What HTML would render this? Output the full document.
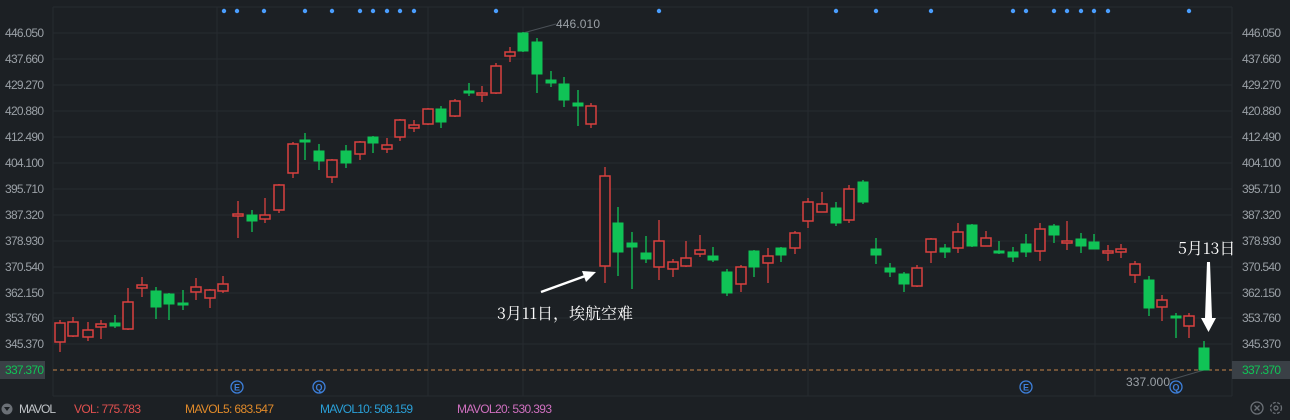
<!DOCTYPE html>
<html><head><meta charset="utf-8"><style>
html,body{margin:0;padding:0;background:#1c2024;width:1290px;height:420px;overflow:hidden;font-family:"Liberation Sans","Noto Sans CJK SC",sans-serif}
svg{position:absolute;left:0;top:0}
.ax{font-size:12px;fill:#9aa0a6}
.r line{stroke:#d9413f;stroke-width:1.3}
.r rect{fill:#1c2024;stroke:#d9413f;stroke-width:1.5}
.g line{stroke:#10c356;stroke-width:1.3}
.g rect{fill:#10c356;stroke:#10c356;stroke-width:1}
.bt{font-size:12px}
</style></head><body>
<svg width="1290" height="420" viewBox="0 0 1290 420">
<g stroke="#262b30" stroke-width="1">
<line x1="53" y1="7" x2="1232" y2="7"/>
<line x1="53" y1="33" x2="1232" y2="33"/><line x1="53" y1="59" x2="1232" y2="59"/><line x1="53" y1="85" x2="1232" y2="85"/><line x1="53" y1="111" x2="1232" y2="111"/><line x1="53" y1="137" x2="1232" y2="137"/><line x1="53" y1="163" x2="1232" y2="163"/><line x1="53" y1="189" x2="1232" y2="189"/><line x1="53" y1="215" x2="1232" y2="215"/><line x1="53" y1="241" x2="1232" y2="241"/><line x1="53" y1="267" x2="1232" y2="267"/><line x1="53" y1="293" x2="1232" y2="293"/><line x1="53" y1="318" x2="1232" y2="318"/><line x1="53" y1="344" x2="1232" y2="344"/>
<line x1="53" y1="396" x2="1232" y2="396"/>
<line x1="53" y1="7" x2="53" y2="396"/><line x1="1232" y1="7" x2="1232" y2="396"/>
<line x1="217" y1="7" x2="217" y2="396"/><line x1="428" y1="7" x2="428" y2="396"/><line x1="523" y1="7" x2="523" y2="396"/><line x1="808" y1="7" x2="808" y2="396"/><line x1="1095" y1="7" x2="1095" y2="396"/>
</g>
<g class="ax" text-anchor="start">
<text x="5" y="37" textLength="39">446.050</text><text x="5" y="63" textLength="39">437.660</text><text x="5" y="89" textLength="39">429.270</text><text x="5" y="115" textLength="39">420.880</text><text x="5" y="141" textLength="39">412.490</text><text x="5" y="167" textLength="39">404.100</text><text x="5" y="193" textLength="39">395.710</text><text x="5" y="219" textLength="39">387.320</text><text x="5" y="245" textLength="39">378.930</text><text x="5" y="271" textLength="39">370.540</text><text x="5" y="297" textLength="39">362.150</text><text x="5" y="322" textLength="39">353.760</text><text x="5" y="348" textLength="39">345.370</text>
<text x="1242" y="37" textLength="39">446.050</text><text x="1242" y="63" textLength="39">437.660</text><text x="1242" y="89" textLength="39">429.270</text><text x="1242" y="115" textLength="39">420.880</text><text x="1242" y="141" textLength="39">412.490</text><text x="1242" y="167" textLength="39">404.100</text><text x="1242" y="193" textLength="39">395.710</text><text x="1242" y="219" textLength="39">387.320</text><text x="1242" y="245" textLength="39">378.930</text><text x="1242" y="271" textLength="39">370.540</text><text x="1242" y="297" textLength="39">362.150</text><text x="1242" y="322" textLength="39">353.760</text><text x="1242" y="348" textLength="39">345.370</text>
</g>
<rect x="0" y="361" width="45" height="18" fill="#3a4046"/>
<rect x="1232" y="361" width="58" height="18" fill="#3a4046"/>
<text x="5" y="374" font-size="12" fill="#10c356" textLength="39">337.370</text>
<text x="1242" y="374" font-size="12" fill="#10c356" textLength="39">337.370</text>
<line x1="53" y1="370" x2="1232" y2="370" stroke="#c8864a" stroke-width="1" stroke-dasharray="4,3"/>
<g fill="#4a9eff">
<circle cx="224" cy="11" r="2.2"/><circle cx="237" cy="11" r="2.2"/><circle cx="264" cy="11" r="2.2"/><circle cx="305" cy="11" r="2.2"/><circle cx="332" cy="11" r="2.2"/><circle cx="360" cy="11" r="2.2"/><circle cx="373" cy="11" r="2.2"/><circle cx="387" cy="11" r="2.2"/><circle cx="400" cy="11" r="2.2"/><circle cx="414" cy="11" r="2.2"/><circle cx="496" cy="11" r="2.2"/><circle cx="659" cy="11" r="2.2"/><circle cx="836" cy="11" r="2.2"/><circle cx="876" cy="11" r="2.2"/><circle cx="931" cy="11" r="2.2"/><circle cx="1013" cy="11" r="2.2"/><circle cx="1026" cy="11" r="2.2"/><circle cx="1054" cy="11" r="2.2"/><circle cx="1067" cy="11" r="2.2"/><circle cx="1081" cy="11" r="2.2"/><circle cx="1094" cy="11" r="2.2"/><circle cx="1108" cy="11" r="2.2"/><circle cx="1189" cy="11" r="2.2"/>
</g>
<line x1="523" y1="33" x2="556" y2="24" stroke="#4a5056"/>
<text x="556" y="28" font-size="12" fill="#9aa0a6" textLength="44">446.010</text>
<line x1="1204" y1="370" x2="1170" y2="380" stroke="#4a5056"/>
<text x="1126" y="386" font-size="12" fill="#9aa0a6" textLength="44">337.000</text>
<!-- candles -->
<g class="r"><line x1="60" y1="320" x2="60" y2="352"/><rect x="55" y="323" width="10" height="19"/></g>
<g class="r"><line x1="73" y1="317" x2="73" y2="337"/><rect x="68" y="322" width="10" height="14"/></g>
<g class="r"><line x1="88" y1="322" x2="88" y2="341"/><rect x="83" y="330" width="10" height="7"/></g>
<g class="r"><line x1="101" y1="320" x2="101" y2="339"/><rect x="96" y="324" width="10" height="3"/></g>
<g class="g"><line x1="115" y1="315" x2="115" y2="328"/><rect x="110" y="323" width="10" height="3"/></g>
<g class="r"><line x1="128" y1="288" x2="128" y2="330"/><rect x="123" y="302" width="10" height="27"/></g>
<g class="r"><line x1="142" y1="277" x2="142" y2="297"/><rect x="137" y="285" width="10" height="3"/></g>
<g class="g"><line x1="156" y1="287" x2="156" y2="319"/><rect x="151" y="291" width="10" height="16"/></g>
<g class="g"><line x1="169" y1="293" x2="169" y2="320"/><rect x="164" y="294" width="10" height="10"/></g>
<g class="g"><line x1="183" y1="290" x2="183" y2="310"/><rect x="178" y="303" width="10" height="2"/></g>
<g class="r"><line x1="196" y1="278" x2="196" y2="300"/><rect x="191" y="287" width="10" height="5"/></g>
<g class="r"><line x1="210" y1="289" x2="210" y2="308"/><rect x="205" y="290" width="10" height="8"/></g>
<g class="r"><line x1="223" y1="276" x2="223" y2="293"/><rect x="218" y="284" width="10" height="7"/></g>
<g class="r"><line x1="238" y1="201" x2="238" y2="238"/><rect x="233" y="214" width="10" height="2"/></g>
<g class="g"><line x1="252" y1="210" x2="252" y2="232"/><rect x="247" y="215" width="10" height="6"/></g>
<g class="r"><line x1="265" y1="198" x2="265" y2="223"/><rect x="260" y="215" width="10" height="4"/></g>
<g class="r"><line x1="279" y1="184" x2="279" y2="213"/><rect x="274" y="185" width="10" height="25"/></g>
<g class="r"><line x1="293" y1="142" x2="293" y2="178"/><rect x="288" y="144" width="10" height="29"/></g>
<g class="g"><line x1="305" y1="133" x2="305" y2="160"/><rect x="300" y="140" width="10" height="2"/></g>
<g class="g"><line x1="319" y1="144" x2="319" y2="170"/><rect x="314" y="151" width="10" height="10"/></g>
<g class="r"><line x1="332" y1="159" x2="332" y2="183"/><rect x="327" y="160" width="10" height="17"/></g>
<g class="g"><line x1="346" y1="145" x2="346" y2="168"/><rect x="341" y="151" width="10" height="12"/></g>
<g class="r"><line x1="360" y1="141" x2="360" y2="160"/><rect x="355" y="142" width="10" height="12"/></g>
<g class="g"><line x1="373" y1="136" x2="373" y2="153"/><rect x="368" y="137" width="10" height="6"/></g>
<g class="r"><line x1="387" y1="138" x2="387" y2="153"/><rect x="382" y="145" width="10" height="4"/></g>
<g class="r"><line x1="400" y1="119" x2="400" y2="141"/><rect x="395" y="120" width="10" height="17"/></g>
<g class="r"><line x1="414" y1="120" x2="414" y2="132"/><rect x="409" y="125" width="10" height="3"/></g>
<g class="r"><line x1="428" y1="108" x2="428" y2="125"/><rect x="423" y="109" width="10" height="15"/></g>
<g class="g"><line x1="441" y1="106" x2="441" y2="128"/><rect x="436" y="109" width="10" height="13"/></g>
<g class="r"><line x1="455" y1="99" x2="455" y2="117"/><rect x="450" y="101" width="10" height="15"/></g>
<g class="g"><line x1="469" y1="83" x2="469" y2="96"/><rect x="464" y="91" width="10" height="2"/></g>
<g class="r"><line x1="482" y1="86" x2="482" y2="102"/><rect x="477" y="93" width="10" height="2"/></g>
<g class="r"><line x1="496" y1="63" x2="496" y2="94"/><rect x="491" y="66" width="10" height="27"/></g>
<g class="r"><line x1="510" y1="47" x2="510" y2="62"/><rect x="505" y="52" width="10" height="4"/></g>
<g class="g"><line x1="523" y1="32" x2="523" y2="52"/><rect x="518" y="33" width="10" height="18"/></g>
<g class="g"><line x1="537" y1="38" x2="537" y2="93"/><rect x="532" y="42" width="10" height="32"/></g>
<g class="g"><line x1="551" y1="71" x2="551" y2="87"/><rect x="546" y="80" width="10" height="3"/></g>
<g class="g"><line x1="564" y1="77" x2="564" y2="107"/><rect x="559" y="84" width="10" height="16"/></g>
<g class="g"><line x1="578" y1="90" x2="578" y2="126"/><rect x="573" y="103" width="10" height="3"/></g>
<g class="r"><line x1="591" y1="103" x2="591" y2="128"/><rect x="586" y="106" width="10" height="18"/></g>
<g class="r"><line x1="605" y1="167" x2="605" y2="283"/><rect x="600" y="176" width="10" height="90"/></g>
<g class="g"><line x1="618" y1="207" x2="618" y2="276"/><rect x="613" y="223" width="10" height="29"/></g>
<g class="g"><line x1="632" y1="232" x2="632" y2="289"/><rect x="627" y="243" width="10" height="4"/></g>
<g class="g"><line x1="646" y1="236" x2="646" y2="263"/><rect x="641" y="253" width="10" height="6"/></g>
<g class="r"><line x1="659" y1="220" x2="659" y2="280"/><rect x="654" y="241" width="10" height="26"/></g>
<g class="r"><line x1="673" y1="259" x2="673" y2="277"/><rect x="668" y="262" width="10" height="7"/></g>
<g class="r"><line x1="686" y1="241" x2="686" y2="267"/><rect x="681" y="258" width="10" height="8"/></g>
<g class="r"><line x1="700" y1="235" x2="700" y2="257"/><rect x="695" y="250" width="10" height="4"/></g>
<g class="g"><line x1="713" y1="247" x2="713" y2="262"/><rect x="708" y="256" width="10" height="4"/></g>
<g class="g"><line x1="727" y1="269" x2="727" y2="296"/><rect x="722" y="272" width="10" height="21"/></g>
<g class="r"><line x1="741" y1="265" x2="741" y2="292"/><rect x="736" y="267" width="10" height="17"/></g>
<g class="g"><line x1="754" y1="250" x2="754" y2="277"/><rect x="749" y="251" width="10" height="16"/></g>
<g class="r"><line x1="768" y1="248" x2="768" y2="283"/><rect x="763" y="256" width="10" height="7"/></g>
<g class="g"><line x1="781" y1="247" x2="781" y2="262"/><rect x="776" y="248" width="10" height="7"/></g>
<g class="r"><line x1="795" y1="231" x2="795" y2="254"/><rect x="790" y="233" width="10" height="15"/></g>
<g class="r"><line x1="808" y1="198" x2="808" y2="228"/><rect x="803" y="202" width="10" height="19"/></g>
<g class="r"><line x1="822" y1="192" x2="822" y2="212"/><rect x="817" y="204" width="10" height="8"/></g>
<g class="g"><line x1="836" y1="202" x2="836" y2="226"/><rect x="831" y="208" width="10" height="15"/></g>
<g class="r"><line x1="849" y1="185" x2="849" y2="223"/><rect x="844" y="189" width="10" height="31"/></g>
<g class="g"><line x1="863" y1="180" x2="863" y2="204"/><rect x="858" y="182" width="10" height="20"/></g>
<g class="g"><line x1="876" y1="238" x2="876" y2="264"/><rect x="871" y="249" width="10" height="6"/></g>
<g class="g"><line x1="890" y1="263" x2="890" y2="277"/><rect x="885" y="268" width="10" height="4"/></g>
<g class="g"><line x1="904" y1="272" x2="904" y2="292"/><rect x="899" y="274" width="10" height="10"/></g>
<g class="r"><line x1="917" y1="265" x2="917" y2="287"/><rect x="912" y="268" width="10" height="18"/></g>
<g class="r"><line x1="931" y1="238" x2="931" y2="263"/><rect x="926" y="239" width="10" height="13"/></g>
<g class="g"><line x1="945" y1="244" x2="945" y2="258"/><rect x="940" y="248" width="10" height="4"/></g>
<g class="r"><line x1="958" y1="223" x2="958" y2="253"/><rect x="953" y="232" width="10" height="16"/></g>
<g class="g"><line x1="972" y1="224" x2="972" y2="247"/><rect x="967" y="225" width="10" height="21"/></g>
<g class="r"><line x1="986" y1="231" x2="986" y2="246"/><rect x="981" y="238" width="10" height="8"/></g>
<g class="g"><line x1="999" y1="241" x2="999" y2="254"/><rect x="994" y="251" width="10" height="2"/></g>
<g class="g"><line x1="1013" y1="247" x2="1013" y2="262"/><rect x="1008" y="252" width="10" height="5"/></g>
<g class="g"><line x1="1026" y1="234" x2="1026" y2="257"/><rect x="1021" y="244" width="10" height="8"/></g>
<g class="r"><line x1="1040" y1="223" x2="1040" y2="261"/><rect x="1035" y="229" width="10" height="22"/></g>
<g class="g"><line x1="1054" y1="224" x2="1054" y2="243"/><rect x="1049" y="226" width="10" height="9"/></g>
<g class="r"><line x1="1067" y1="221" x2="1067" y2="250"/><rect x="1062" y="241" width="10" height="2"/></g>
<g class="g"><line x1="1081" y1="233" x2="1081" y2="253"/><rect x="1076" y="239" width="10" height="7"/></g>
<g class="g"><line x1="1094" y1="234" x2="1094" y2="249"/><rect x="1089" y="242" width="10" height="7"/></g>
<g class="r"><line x1="1108" y1="245" x2="1108" y2="261"/><rect x="1103" y="251" width="10" height="2"/></g>
<g class="r"><line x1="1121" y1="244" x2="1121" y2="258"/><rect x="1116" y="249" width="10" height="3"/></g>
<g class="r"><line x1="1135" y1="261" x2="1135" y2="283"/><rect x="1130" y="264" width="10" height="11"/></g>
<g class="g"><line x1="1149" y1="276" x2="1149" y2="316"/><rect x="1144" y="280" width="10" height="28"/></g>
<g class="r"><line x1="1162" y1="295" x2="1162" y2="321"/><rect x="1157" y="300" width="10" height="7"/></g>
<g class="g"><line x1="1176" y1="313" x2="1176" y2="338"/><rect x="1171" y="316" width="10" height="2"/></g>
<g class="r"><line x1="1189" y1="313" x2="1189" y2="338"/><rect x="1184" y="316" width="10" height="10"/></g>
<g class="g"><line x1="1204" y1="341" x2="1204" y2="370"/><rect x="1199" y="348" width="10" height="22"/></g>
<!-- annotations -->
<line x1="541" y1="292" x2="588" y2="275" stroke="#fff" stroke-width="2.5"/>
<polygon points="596,272 582,271 586,282" fill="#fff"/>
<text x="497" y="319" font-size="16" fill="#fff" font-family="'Noto Serif CJK SC','Liberation Serif',serif">3月11日，埃航空难</text>
<text x="1178" y="254" font-size="16" fill="#fff" font-family="'Noto Serif CJK SC','Liberation Serif',serif">5月13日</text>
<polygon points="1207,262 1210,262 1212,318 1216,318 1208.5,332 1201,318 1205,318" fill="#fff"/>
<!-- E/Q -->
<g fill="none" stroke="#3d7fd9" stroke-width="1.3">
<circle cx="237" cy="387" r="6"/><circle cx="319" cy="387" r="6"/><circle cx="1026" cy="387" r="6"/><circle cx="1176" cy="387" r="6"/>
</g>
<g font-size="9" fill="#3d7fd9" text-anchor="middle" font-weight="bold">
<text x="237" y="390.5">E</text><text x="319" y="390.5">Q</text><text x="1026" y="390.5">E</text><text x="1176" y="390.5">Q</text>
</g>
<!-- bottom bar -->
<circle cx="7" cy="409" r="5.5" fill="#6b7076"/>
<polygon points="4,407 10,407 7,411" fill="#1c2024"/>
<text class="bt" x="19" y="413" fill="#c0c4c8" textLength="37">MAVOL</text>
<text class="bt" x="74" y="413" fill="#e0504f" textLength="67">VOL: 775.783</text>
<text class="bt" x="185" y="413" fill="#e08a2a" textLength="89">MAVOL5: 683.547</text>
<text class="bt" x="320" y="413" fill="#2aa0d8" textLength="93">MAVOL10: 508.159</text>
<text class="bt" x="457" y="413" fill="#d070c0" textLength="95">MAVOL20: 530.393</text>
<g fill="none" stroke="#6b7076" stroke-width="1.3">
<circle cx="1257" cy="408" r="6"/><line x1="1254.5" y1="405.5" x2="1259.5" y2="410.5"/><line x1="1259.5" y1="405.5" x2="1254.5" y2="410.5"/>
<circle cx="1276" cy="408" r="5.5" stroke-dasharray="3,1.5"/><circle cx="1276" cy="408" r="2"/>
</g>
</svg>
</body></html>
